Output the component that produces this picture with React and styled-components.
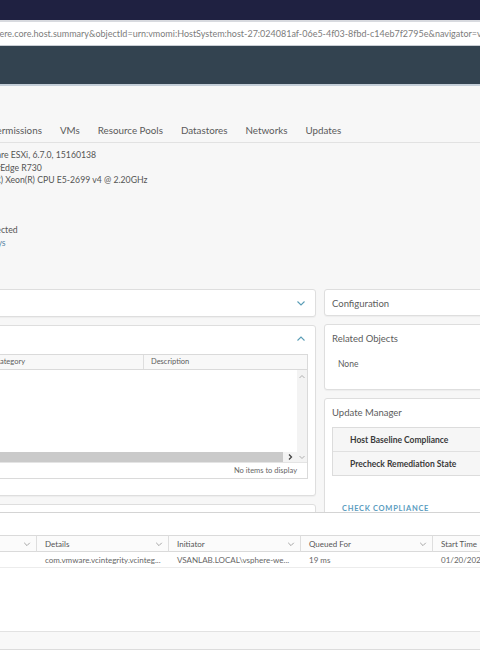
import React from 'react';
import styled, { createGlobalStyle } from 'styled-components';

const Global = createGlobalStyle`
  html, body { margin: 0; padding: 0; }
  body {
    width: 480px; height: 650px; overflow: hidden;
    background: #f7f7f7;
    font-family: Lato, "Liberation Sans", sans-serif;
    color: #565656;
  }
  #root { width: 480px; height: 650px; overflow: hidden; }
`;

const Frame = styled.div`
  width: 480px; height: 650px; display: flex; flex-direction: column; overflow: hidden;
`;
const TopBar = styled.div`
  flex: none; height: 20px; background: #1f2141;
`;
const UrlBar = styled.div`
  flex: none; height: 23px; background: #fff;
  border-top: 2px solid #d8dadf; border-bottom: 1px solid #c9ced4;
  display: flex; align-items: center; overflow: hidden; white-space: nowrap;
  font-size: 9px; color: #7c7c7c;
`;
const UrlText = styled.span`
  margin-left: ${p => p.$shift}px;
`;
const Header = styled.div`
  flex: none; height: 38px; background: #334350;
  border-bottom: 2px solid #c4ced8;
`;
const Main = styled.div`
  flex: none; height: 426px; overflow: hidden; background: #f7f7f7;
  display: flex; flex-direction: column;
`;
const Tabs = styled.div`
  flex: none; margin-top: 32px; height: 24px; display: flex; align-items: center;
  border-bottom: 1px solid #e2e2e2; white-space: nowrap;
`;
const Tab = styled.span`
  font-size: 9.8px; color: #5a5a5a; margin-right: 18px;
  &:first-child { margin-left: -9px; }
`;
const Summary = styled.div`
  margin-top: 6px; margin-left: -24px; display: flex; flex-direction: column;
`;
const SumLine = styled.div`
  height: 12.5px; line-height: 12.5px; font-size: 8.7px; color: ${p => (p.$link ? '#5b87a6' : '#555')};
  white-space: nowrap;
`;
const Cards = styled.div`
  margin-top: 40px; margin-left: -84px;
  display: grid; grid-template-columns: 400px 200px; column-gap: 8px; align-items: start;
`;
const Col = styled.div`
  display: flex; flex-direction: column; gap: 8px;
`;
const Card = styled.div`
  background: #fff; border: 1px solid #dedede; border-radius: 3px;
  box-shadow: 0 1px 1px rgba(0,0,0,0.04);
  box-sizing: border-box; height: ${p => p.$h}px;
  display: flex; flex-direction: column;
`;
const CardHead = styled.div`
  flex: none; height: 26px; display: flex; align-items: center; justify-content: space-between;
  padding: 0 9px 0 7px; font-size: 9.5px; color: #5c5c5c;
`;
const Chevron = styled.svg`
  width: 10px; height: 10px; flex: none;
`;
const Table = styled.div`
  margin: 2px 7px 0 7px; border: 1px solid #dadada; height: 125px; box-sizing: border-box;
  display: flex; flex-direction: column; background: #fff;
`;
const THead = styled.div`
  flex: none; height: 14px; display: grid; grid-template-columns: 62px 156px 1fr;
  background: #f8f8f8; border-bottom: 1px solid #dadada;
`;
const TH = styled.div`
  font-size: 7.5px; color: #5c5c5c; line-height: 14px; padding-left: ${p => (p.$first ? 8 : 7)}px;
  border-left: ${p => (p.$first ? 'none' : '1px solid #dedede')};
  white-space: nowrap; overflow: hidden;
`;
const TBody = styled.div`
  flex: 1; display: flex;
`;
const TArea = styled.div`
  flex: 1;
`;
const VScroll = styled.div`
  flex: none; width: 10px; background: #f3f3f3; display: flex; justify-content: center;
  padding-top: 3px; box-sizing: border-box;
`;
const HScroll = styled.div`
  flex: none; height: 10px; display: flex; background: #f3f3f3;
`;
const Thumb = styled.div`
  flex: 1; background: #cacaca;
`;
const ArrowBox = styled.div`
  flex: none; width: ${p => p.$w}px; display: flex; align-items: center; justify-content: center;
`;
const TFoot = styled.div`
  flex: none; height: 15px; border-top: 1px solid #e4e4e4; display: flex; align-items: center;
  justify-content: flex-end; padding-right: 10px; font-size: 7.5px; color: #666;
`;
const Body = styled.div`
  padding: ${p => p.$pad || '0 7px'}; font-size: ${p => p.$fs || 8.5}px; color: #5c5c5c;
`;
const UMBox = styled.div`
  margin: 2px 0 0 7px; border: 1px solid #dcdcdc; border-right: none; background: #f6f6f6;
  display: flex; flex-direction: column;
`;
const UMRow = styled.div`
  height: 23px; display: flex; align-items: center; padding-left: 17px;
  font-size: 8.5px; font-weight: 700; color: #3a3a3a;
  & + & { border-top: 1px solid #e0e0e0; }
`;
const Action = styled.div`
  margin: 28px 0 0 17px; font-size: 7.5px; font-weight: 700; letter-spacing: 0.7px; color: #5b9dbf;
`;
const Tasks = styled.div`
  flex: 1; background: #fff; border-top: 1px solid #d4d4d4; display: flex; flex-direction: column;
  overflow: hidden;
`;
const TaskGrid = styled.div`
  margin-left: -96px; margin-top: 22px;
  display: grid; grid-template-columns: repeat(5, 132px);
`;
const TaskHead = styled.div`
  height: 15px; display: flex; align-items: center; justify-content: space-between;
  padding: 0 5px 0 8px; font-size: 8px; color: #555; white-space: nowrap;
  background: #fbfbfb;
  border-top: 1px solid #dadada; border-bottom: 1px solid #dadada;
  border-left: 1px solid #dedede;
`;
const TaskCell = styled.div`
  height: 15px; display: flex; align-items: center; padding-left: 9px;
  font-size: 8px; color: #666; white-space: nowrap; overflow: hidden;
  border-bottom: 1px solid #ececec;
`;
const Spacer = styled.div`
  flex: 1;
`;
const TaskFoot = styled.div`
  flex: none; height: 17px; background: #f8f8f8; border-top: 1px solid #e2e2e2;
  border-bottom: 1px solid #dcdcdc;
`;

const ChevronDown = ({ color = '#5a9db6', size = 10 }) => (
  <Chevron viewBox="0 0 10 10" style={{ width: size, height: size }}>
    <path d="M1.5 3.5 L5 7 L8.5 3.5" fill="none" stroke={color} strokeWidth="1.1" />
  </Chevron>
);
const ChevronUp = ({ color = '#5a9db6' }) => (
  <Chevron viewBox="0 0 10 10">
    <path d="M1.5 6.5 L5 3 L8.5 6.5" fill="none" stroke={color} strokeWidth="1.1" />
  </Chevron>
);
const SmallArrow = ({ dir }) => {
  const d = dir === 'up' ? 'M1.5 5 L4 2.5 L6.5 5' : dir === 'down' ? 'M1.5 3 L4 5.5 L6.5 3' : 'M3 1.5 L5.5 4 L3 6.5';
  return (
    <svg width="8" height="8" viewBox="0 0 8 8">
      <path d={d} fill="none" stroke={dir === 'right' ? '#444' : '#b0b0b0'} strokeWidth={dir === 'right' ? 1.3 : 1} />
    </svg>
  );
};
const SortIcon = styled.svg`
  width: 8px; height: 10px; flex: none;
`;

const tabs = ['Permissions', 'VMs', 'Resource Pools', 'Datastores', 'Networks', 'Updates'];
const summary = [
  'VMware ESXi, 6.7.0, 15160138',
  'PowerEdge R730',
  'Intel(R) Xeon(R) CPU E5-2699 v4 @ 2.20GHz',
  '88',
  '4',
  '3',
  'Connected',
  '13 days',
];
const taskCols = ['Task Name', 'Details', 'Initiator', 'Queued For', 'Start Time'];
const taskRow = ['Check new notifications', 'com.vmware.vcintegrity.vcinteg...', 'VSANLAB.LOCAL\\vsphere-we...', '19 ms', '01/20/2020, 10:12:04 AM'];

export default function App() {
  return (
    <Frame>
      <Global />
      <TopBar />
      <UrlBar>
        <UrlText $shift={-19}>
          vsphere.core.host.summary&amp;objectId=urn:vmomi:HostSystem:host-27:024081af-06e5-4f03-8fbd-c14eb7f2795e&amp;navigator=vsphere.core.viTree.hostsAndClustersView
        </UrlText>
      </UrlBar>
      <Header />
      <Main>
        <Tabs>
          {tabs.map(t => <Tab key={t}>{t}</Tab>)}
        </Tabs>
        <Summary>
          {summary.map((s, i) => (
            <SumLine key={i} $link={i === 7}>{s}</SumLine>
          ))}
        </Summary>
        <Cards>
          <Col>
            <Card $h={28}>
              <CardHead><span>Hardware</span><ChevronDown /></CardHead>
            </Card>
            <Card $h={171}>
              <CardHead><span>Custom Attributes</span><ChevronUp /></CardHead>
              <Table>
                <THead>
                  <TH $first>Attribute</TH>
                  <TH>Category</TH>
                  <TH>Description</TH>
                </THead>
                <TBody>
                  <TArea />
                  <VScroll><SmallArrow dir="up" /></VScroll>
                </TBody>
                <HScroll>
                  <Thumb />
                  <ArrowBox $w={14}><SmallArrow dir="right" /></ArrowBox>
                  <ArrowBox $w={10}><SmallArrow dir="down" /></ArrowBox>
                </HScroll>
                <TFoot>No items to display</TFoot>
              </Table>
            </Card>
            <Card $h={60}>
              <CardHead><span>Tags</span><ChevronUp /></CardHead>
            </Card>
          </Col>
          <Col>
            <Card $h={27}>
              <CardHead><span>Configuration</span></CardHead>
            </Card>
            <Card $h={66}>
              <CardHead><span>Related Objects</span></CardHead>
              <Body $pad="8px 13px" $fs={8.5}>None</Body>
            </Card>
            <Card $h={140}>
              <CardHead><span>Update Manager</span></CardHead>
              <UMBox>
                <UMRow>Host Baseline Compliance</UMRow>
                <UMRow>Precheck Remediation State</UMRow>
              </UMBox>
              <Action>CHECK COMPLIANCE</Action>
            </Card>
          </Col>
        </Cards>
      </Main>
      <Tasks>
        <TaskGrid>
          {taskCols.map((c, i) => (
            <TaskHead key={c}>
              <span>{c}</span>
              {i === 4 ? (
                <SortIcon viewBox="0 0 8 10">
                  <path d="M4 1 V8 M1.5 5.5 L4 8.5 L6.5 5.5" fill="none" stroke="#3a86c4" strokeWidth="1.2" />
                </SortIcon>
              ) : (
                <ChevronDown color="#9a9a9a" size={8} />
              )}
            </TaskHead>
          ))}
          {taskRow.map((c, i) => <TaskCell key={i}>{c}</TaskCell>)}
        </TaskGrid>
        <Spacer />
        <TaskFoot />
      </Tasks>
    </Frame>
  );
}
